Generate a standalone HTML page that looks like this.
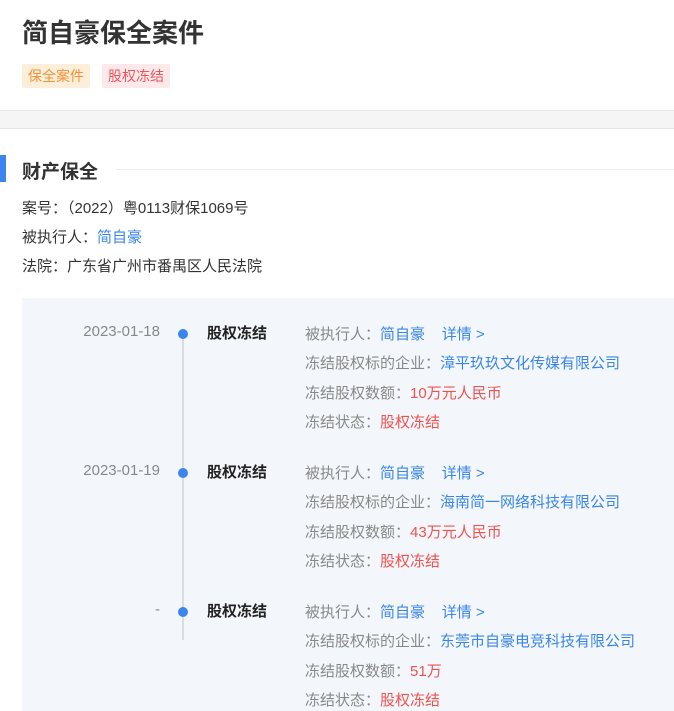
<html><head><style>
body{margin:0;width:674px;height:711px;overflow:hidden;background:#fff;font-family:"Liberation Sans","Noto Sans CJK SC",sans-serif;color:#333;position:relative}
.a{position:absolute;white-space:nowrap}
.tag{position:absolute;top:64px;height:24px;line-height:24px;font-size:14px;padding:0 6px;border-radius:2px}
.box{position:absolute;left:22px;top:298px;width:652px;height:413px;background:#f3f7fb}
.d{font-size:15px;color:#888;width:140px;text-align:right;left:20px}
.dot{width:10px;height:10px;border-radius:50%;background:#3c85ee;left:178px}
.e{left:207px;font-size:15px;font-weight:bold;color:#222}
.l{left:305px;font-size:15px;color:#888}
.b{color:#3a86e6}.r{color:#f0524f}
.t{font-size:15px;color:#333;left:22px}
</style></head><body>
<div class="a" style="left:22px;top:13px;font-size:26px;font-weight:bold;color:#333">简自豪保全案件</div>
<div class="tag" style="left:22px;background:#fcefd9;color:#f2913c">保全案件</div>
<div class="tag" style="left:102px;background:#fde9ea;color:#e9585d">股权冻结</div>
<div class="a" style="left:0;top:110px;width:674px;height:17px;background:#f5f5f5;border-top:1px solid #e6e6e6;border-bottom:1px solid #e6e6e6"></div>
<div class="a" style="left:0;top:155px;width:6px;height:27px;background:#3c85ee"></div>
<div class="a" style="left:22px;top:157px;font-size:19px;font-weight:bold;color:#333">财产保全</div>
<div class="a" style="left:116px;top:169px;width:558px;height:1px;background:#eee"></div>
<div class="a t" style="top:197px">案号：（2022）粤0113财保1069号</div>
<div class="a t" style="top:226px">被执行人：<span class="b">简自豪</span></div>
<div class="a t" style="top:255px">法院：广东省广州市番禺区人民法院</div>
<div class="box"></div>
<div class="a" style="left:182px;top:336px;width:2px;height:304px;background:#d8dde3"></div>

<div class="a d" style="top:323px">2023-01-18</div>
<div class="a dot" style="top:329px"></div>
<div class="a e" style="top:322px">股权冻结</div>
<div class="a l" style="top:323px">被执行人：<span class="b">简自豪</span>&nbsp;&nbsp;&nbsp;&nbsp;<span class="b">详情 &gt;</span></div>
<div class="a l" style="top:352px">冻结股权标的企业：<span class="b">漳平玖玖文化传媒有限公司</span></div>
<div class="a l" style="top:382px">冻结股权数额：<span class="r">10万元人民币</span></div>
<div class="a l" style="top:411px">冻结状态：<span class="r">股权冻结</span></div>

<div class="a d" style="top:462px">2023-01-19</div>
<div class="a dot" style="top:468px"></div>
<div class="a e" style="top:461px">股权冻结</div>
<div class="a l" style="top:462px">被执行人：<span class="b">简自豪</span>&nbsp;&nbsp;&nbsp;&nbsp;<span class="b">详情 &gt;</span></div>
<div class="a l" style="top:491px">冻结股权标的企业：<span class="b">海南简一网络科技有限公司</span></div>
<div class="a l" style="top:521px">冻结股权数额：<span class="r">43万元人民币</span></div>
<div class="a l" style="top:550px">冻结状态：<span class="r">股权冻结</span></div>

<div class="a d" style="top:601px">-</div>
<div class="a dot" style="top:607px"></div>
<div class="a e" style="top:600px">股权冻结</div>
<div class="a l" style="top:601px">被执行人：<span class="b">简自豪</span>&nbsp;&nbsp;&nbsp;&nbsp;<span class="b">详情 &gt;</span></div>
<div class="a l" style="top:630px">冻结股权标的企业：<span class="b">东莞市自豪电竞科技有限公司</span></div>
<div class="a l" style="top:660px">冻结股权数额：<span class="r">51万</span></div>
<div class="a l" style="top:689px">冻结状态：<span class="r">股权冻结</span></div>
</body></html>
